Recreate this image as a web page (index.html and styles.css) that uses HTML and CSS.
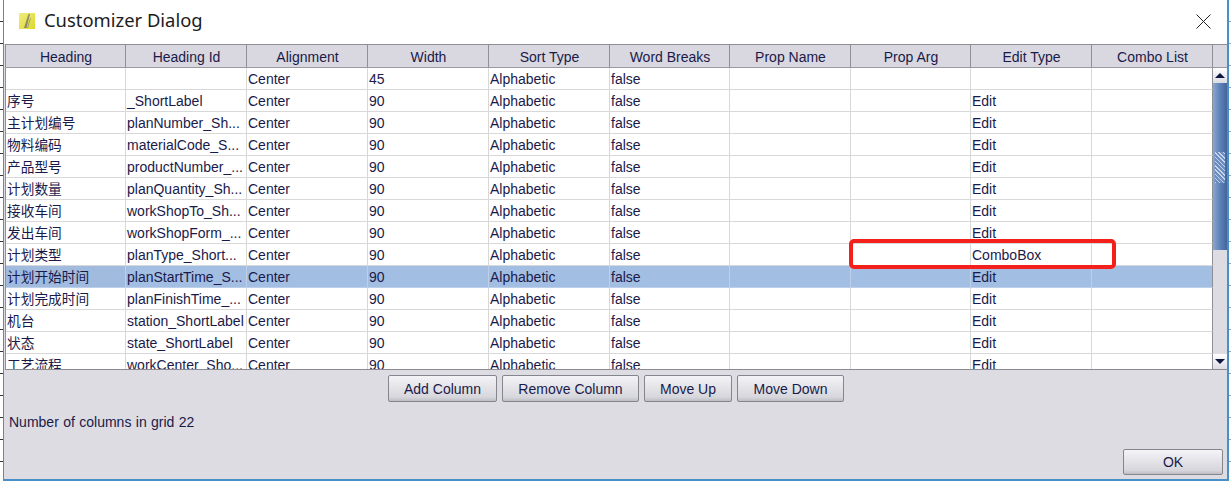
FILE: index.html
```html
<!DOCTYPE html>
<html lang="en">
<head>
<meta charset="utf-8">
<title>Customizer Dialog</title>
<link rel="stylesheet" href="styles.css">
</head>
<body>
<div class="dialog">
  <header class="titlebar">
    <svg class="app-icon" width="16" height="16" viewBox="0 0 16 16"><defs><linearGradient id="iconfill" x1="0" y1="0" x2="1" y2="1"><stop offset="0" stop-color="#f0ec80"/><stop offset="1" stop-color="#dcd92e"/></linearGradient></defs><rect width="16" height="16" fill="url(#iconfill)"/><path d="M5 15 9.500 1 11 1 7.500 15z" fill="#8d8b62"/><path d="M8.500 15 11.500 5" stroke="#a6a472" fill="none"/></svg>
    <span class="title">Customizer Dialog</span>
    <svg class="close" width="15" height="15" viewBox="0 0 15 15"><path d="M.5.5l14 14M14.500.5l-14 14" stroke="#222" fill="none"/></svg>
  </header>
  <section class="grid-frame">
    <div class="grid-head">
      <div class="hcell">Heading</div><div class="hcell">Heading Id</div><div class="hcell">Alignment</div><div class="hcell">Width</div><div class="hcell">Sort Type</div><div class="hcell">Word Breaks</div><div class="hcell">Prop Name</div><div class="hcell">Prop Arg</div><div class="hcell">Edit Type</div><div class="hcell">Combo List</div><div class="hcell corner"></div>
    </div>
    <div class="grid-body">
      <div class="rows">
        <div class="row"><div class="cell"></div><div class="cell"></div><div class="cell">Center</div><div class="cell">45</div><div class="cell">Alphabetic</div><div class="cell">false</div><div class="cell"></div><div class="cell"></div><div class="cell"></div><div class="cell"></div></div>
        <div class="row"><div class="cell">序号</div><div class="cell">_ShortLabel</div><div class="cell">Center</div><div class="cell">90</div><div class="cell">Alphabetic</div><div class="cell">false</div><div class="cell"></div><div class="cell"></div><div class="cell">Edit</div><div class="cell"></div></div>
        <div class="row"><div class="cell">主计划编号</div><div class="cell">planNumber_Sh...</div><div class="cell">Center</div><div class="cell">90</div><div class="cell">Alphabetic</div><div class="cell">false</div><div class="cell"></div><div class="cell"></div><div class="cell">Edit</div><div class="cell"></div></div>
        <div class="row"><div class="cell">物料编码</div><div class="cell">materialCode_S...</div><div class="cell">Center</div><div class="cell">90</div><div class="cell">Alphabetic</div><div class="cell">false</div><div class="cell"></div><div class="cell"></div><div class="cell">Edit</div><div class="cell"></div></div>
        <div class="row"><div class="cell">产品型号</div><div class="cell">productNumber_...</div><div class="cell">Center</div><div class="cell">90</div><div class="cell">Alphabetic</div><div class="cell">false</div><div class="cell"></div><div class="cell"></div><div class="cell">Edit</div><div class="cell"></div></div>
        <div class="row"><div class="cell">计划数量</div><div class="cell">planQuantity_Sh...</div><div class="cell">Center</div><div class="cell">90</div><div class="cell">Alphabetic</div><div class="cell">false</div><div class="cell"></div><div class="cell"></div><div class="cell">Edit</div><div class="cell"></div></div>
        <div class="row"><div class="cell">接收车间</div><div class="cell">workShopTo_Sh...</div><div class="cell">Center</div><div class="cell">90</div><div class="cell">Alphabetic</div><div class="cell">false</div><div class="cell"></div><div class="cell"></div><div class="cell">Edit</div><div class="cell"></div></div>
        <div class="row"><div class="cell">发出车间</div><div class="cell">workShopForm_...</div><div class="cell">Center</div><div class="cell">90</div><div class="cell">Alphabetic</div><div class="cell">false</div><div class="cell"></div><div class="cell"></div><div class="cell">Edit</div><div class="cell"></div></div>
        <div class="row"><div class="cell">计划类型</div><div class="cell">planType_Short...</div><div class="cell">Center</div><div class="cell">90</div><div class="cell">Alphabetic</div><div class="cell">false</div><div class="cell"></div><div class="cell"></div><div class="cell">ComboBox</div><div class="cell"></div></div>
        <div class="row selected"><div class="cell">计划开始时间</div><div class="cell">planStartTime_S...</div><div class="cell">Center</div><div class="cell">90</div><div class="cell">Alphabetic</div><div class="cell">false</div><div class="cell"></div><div class="cell"></div><div class="cell">Edit</div><div class="cell"></div></div>
        <div class="row"><div class="cell">计划完成时间</div><div class="cell">planFinishTime_...</div><div class="cell">Center</div><div class="cell">90</div><div class="cell">Alphabetic</div><div class="cell">false</div><div class="cell"></div><div class="cell"></div><div class="cell">Edit</div><div class="cell"></div></div>
        <div class="row"><div class="cell">机台</div><div class="cell">station_ShortLabel</div><div class="cell">Center</div><div class="cell">90</div><div class="cell">Alphabetic</div><div class="cell">false</div><div class="cell"></div><div class="cell"></div><div class="cell">Edit</div><div class="cell"></div></div>
        <div class="row"><div class="cell">状态</div><div class="cell">state_ShortLabel</div><div class="cell">Center</div><div class="cell">90</div><div class="cell">Alphabetic</div><div class="cell">false</div><div class="cell"></div><div class="cell"></div><div class="cell">Edit</div><div class="cell"></div></div>
        <div class="row"><div class="cell">工艺流程</div><div class="cell">workCenter_Sho...</div><div class="cell">Center</div><div class="cell">90</div><div class="cell">Alphabetic</div><div class="cell">false</div><div class="cell"></div><div class="cell"></div><div class="cell">Edit</div><div class="cell"></div></div>
        <div class="highlight"></div>
      </div>
      <div class="scrollbar">
        <div class="arrow"><span class="tri up"></span></div>
        <div class="thumb"><span class="grip"></span></div>
        <div class="track"></div>
        <div class="arrow"><span class="tri down"></span></div>
      </div>
    </div>
  </section>
  <div class="actions">
    <button class="btn">Add Column</button>
    <button class="btn">Remove Column</button>
    <button class="btn">Move Up</button>
    <button class="btn">Move Down</button>
  </div>
  <p class="count">Number of columns in grid 22</p>
  <footer class="footer"><button class="btn ok">OK</button></footer>
</div>
</body>
</html>
```
FILE: styles.css
```css
* { box-sizing: border-box; }
html, body { margin: 0; height: 100%; overflow: hidden; }
body {
  font-family: "Liberation Sans", "Noto Sans CJK SC", sans-serif; color: #1a1a4a; font-size: 13px;
  background-color: #fff;
  background-image: repeating-linear-gradient(#fff 0 21px, #333 21px 22px), repeating-linear-gradient(#fff 0 21px, #8fa4bc 21px 22px);
  background-size: 3px 100%, 2px 100%;
  background-position: left top, right top;
  background-repeat: no-repeat;
  padding-left: 3px;
}
.dialog {
  width: 1226px; height: 481px; padding-left: 1px;
  border-left: 1px solid #4a90c8; border-right: 2px solid #4a90c8; border-bottom: 2px solid #4a90c8;
  background: #dddce2; display: flex; flex-direction: column;
}
.titlebar { height: 44px; margin-left: -1px; background: #fff; display: flex; align-items: center; padding: 0 16px 2px 15px; flex: none; }
.app-icon { flex: none; }
.title { font-family: "Noto Sans", "Liberation Sans", sans-serif; font-size: 18.4px; line-height: 22px; padding-bottom: 2px; color: #1c1c1c; margin-left: 9px; flex: 1; }
.close { flex: none; }
.grid-frame { flex: none; height: 326px; display: flex; flex-direction: column; }
.grid-head { display: grid; grid-template-columns: 120px 121px 121px 121px 121px 120px 121px 120px 121px 121px 1fr; height: 24px; flex: none; background: #d9d8e0; border-top: 1px solid #8f8f96; border-left: 1px solid #8f8f96; border-bottom: 1px solid #9a9aa2; }
.hcell { border-right: 1px solid #8f8f96; text-align: center; padding-left: 1px; line-height: 24px; font-size: 14px; white-space: nowrap; overflow: hidden; }
.hcell.corner { border-right: none; }
.grid-body { flex: 1; min-height: 0; display: flex; border-bottom: 1px solid #8a8a92; border-left: 1px solid #8f8f96; }
.rows { flex: 1; min-width: 0; background: #fff; overflow: hidden; position: relative; }
.row { display: grid; grid-template-columns: 120px 121px 121px 121px 121px 120px 121px 120px 121px 121px; height: 22px; }
.cell { border-right: 1px solid #d8d8d8; border-bottom: 1px solid #d8d8d8; padding-left: 1px; line-height: 23px; font-size: 14px; white-space: nowrap; overflow: hidden; }
.cell:first-child { font-size: 13.7px; }
.cell:last-child { border-right-color: #8f8f96; }
.row.selected { background: #a3bee3; }
.row.selected .cell { border-color: #bcd0ec; }
.row.selected .cell:first-child { background: #a1bbdf; }
.row.selected .cell:last-child { border-right-color: #8f8f96; }
.highlight { position: absolute; left: 843px; top: 171px; width: 267px; height: 30px; border: 4px solid #f3201c; border-radius: 5px; pointer-events: none; }
.scrollbar { width: 14px; flex: none; display: flex; flex-direction: column; background: #dcdce2; }
.arrow { height: 15px; flex: none; background: linear-gradient(#fff, #dcdce4); display: flex; align-items: center; justify-content: center; }
.tri { width: 0; height: 0; border-left: 5px solid transparent; border-right: 5px solid transparent; }
.tri.up { border-bottom: 5px solid #0c1440; }
.tri.down { border-top: 5px solid #0c1440; }
.thumb { height: 167px; flex: none; background: linear-gradient(90deg, #8aa6d4, #5d82b8 50%, #44659c); display: flex; justify-content: center; padding-top: 69px; }
.grip { width: 10px; height: 31px; background: repeating-linear-gradient(45deg, #c4d2ea 0 1px, #6c8dc0 1px 3px); }
.track { flex: 1; }
.actions { flex: none; display: grid; grid-template-columns: 109px 137px 88px 107px; gap: 5px; padding: 5px 0 0 383px; height: 33px; }
.btn { font: 14px "Liberation Sans", sans-serif; color: #1a1a4a; height: 27px; padding: 0; border: 1px solid #85858d; border-radius: 2px; background: linear-gradient(#f4f4f7, #d6d6dc 85%, #bdbdc4); }
.count { margin: 11px 0 0 4px; font-size: 14px; word-spacing: .5px; line-height: 16px; flex: none; }
.footer { flex: 1; display: flex; justify-content: flex-end; align-items: flex-end; padding: 0 4px 4px 0; }
.btn.ok { width: 100px; height: 26px; }
```
